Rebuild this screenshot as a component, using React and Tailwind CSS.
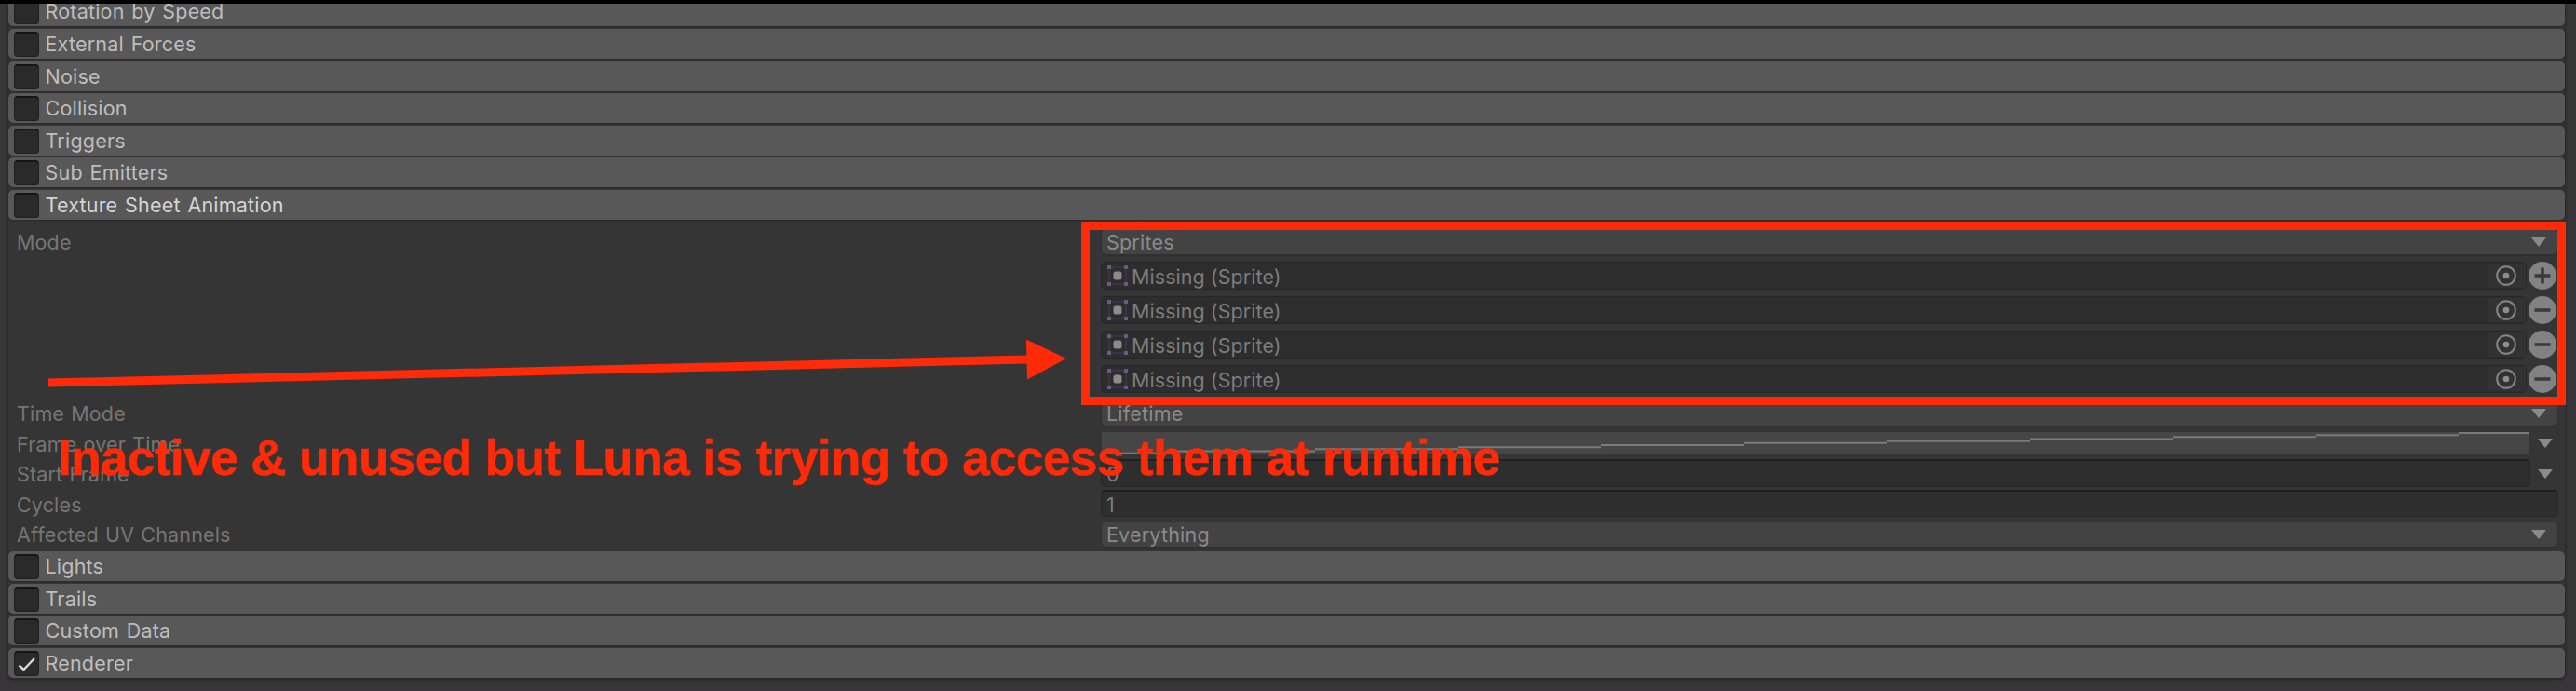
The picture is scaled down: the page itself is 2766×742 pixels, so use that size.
import React from "react";

const TOP = ["External Forces", "Noise", "Collision", "Triggers", "Sub Emitters", "Texture Sheet Animation"];
const BOTTOM = ["Lights", "Trails", "Custom Data", "Renderer"];
const STEPS = [0, 76, 229, 383, 536, 690, 843, 997, 1150, 1304, 1457, 1533];

function ModuleHeader({ label, checked, active, first }) {
  return (
    <div className={`shrink-0 ${first ? "h-[27px]" : "h-[34.6px]"} flex flex-col justify-end overflow-hidden`}>
      <div className="h-[32px] shrink-0 rounded-[5px] bg-[#585858] flex items-center pl-[6px] mb-[2.6px] shadow-[0_0_2px_1px_#282828]">
        <div className="w-[27px] h-[27px] mt-[1px] rounded-[4px] bg-[#2a2a2a] border border-[#202020] border-t-2 border-t-[#151515] flex items-center justify-center">
          {checked && (
            <svg width="20" height="18" viewBox="0 0 20 18" fill="none">
              <path d="M1.5 10.5 L6.5 15 L18 3" stroke="#d6d6d6" strokeWidth="2.4" />
            </svg>
          )}
        </div>
        <span className={`ml-[6.500px] text-[21.5px] leading-[32px] tracking-[0.2px] [word-spacing:1.5px] ${active ? "text-[#d4d4d4]" : "text-[#bdbdbd]"}`}>{label}</span>
      </div>
    </div>
  );
}

function Caret() {
  return (
    <svg width="16" height="10" viewBox="0 0 16 10" className="mt-px shrink-0">
      <path d="M0 0H16L8 10Z" fill="#8a8a8a" />
    </svg>
  );
}

function Label({ children, top }) {
  return <div className={`w-[1174px] shrink-0 ${top ? "" : "pt-[2px]"} pl-[9px] text-[21.5px] leading-[28px] tracking-[0.15px] [word-spacing:1px] text-[#757575]`}>{children}</div>;
}

function Dropdown({ children }) {
  return (
    <div className="w-[1563px] h-[27px] rounded-[5px] bg-[#434343] shadow-[0_1px_0_1px_#303030] flex items-center justify-between pl-[5px] pr-[12px] text-[21.5px] leading-[27px] tracking-[0.2px] text-[#8a8a8a]">
      <span className="pt-[2px]">{children}</span>
      <Caret />
    </div>
  );
}

function SpriteRow({ add }) {
  return (
    <div className="h-[36.8px] flex items-center">
      <div className="ml-[-1px] w-[1531px] h-[30px] rounded-[5px] bg-[#2d2d2d] border border-[#262626] flex items-center pl-[6px]">
        <svg width="22" height="22" viewBox="0 0 22 22" className="shrink-0">
          <path d="M2 2H20V20H2Z" fill="none" stroke="#443c56" strokeWidth="1.2" />
          <path d="M0 0H4V4H0ZM18 0H22V4H18ZM0 18H4V22H0ZM18 18H22V22H18Z" fill="#695b85" />
          <rect x="6.5" y="6.5" width="9" height="9" rx="2.5" fill="#8b8b8b" />
        </svg>
        <span className="ml-[4px] pt-[2px] grow text-[21.5px] leading-[26px] tracking-[0.05px] text-[#7c7c7c]">Missing (Sprite)</span>
        <div className="w-[40px] h-[26px] bg-[#323232] flex items-center justify-center pr-[2px]">
          <svg width="22" height="22" viewBox="0 0 22 22">
            <circle cx="11" cy="11" r="9.8" fill="none" stroke="#858585" strokeWidth="2" />
            <circle cx="11" cy="11" r="3.3" fill="#8d8d8d" />
          </svg>
        </div>
      </div>
      <svg width="30" height="30" viewBox="0 0 30 30" className="ml-[2px] shrink-0">
        <circle cx="15" cy="15" r="15" fill="#828282" />
        <path d={add ? "M6.5 15H23.5M15 6.5V23.5" : "M6.5 15H23.5"} stroke="#3a3a3a" strokeWidth="3.6" />
      </svg>
    </div>
  );
}

function Curve() {
  let d = "";
  for (let i = 0; i < STEPS.length - 1; i++) {
    const y = 22.7 - i * 2.17;
    d += `M${STEPS[i]} ${y}H${STEPS[i + 1]}`;
  }
  return (
    <svg width="1533" height="24" viewBox="0 0 1533 24" className="bg-[#464646] shrink-0">
      <path d={d} stroke="#7b7b7b" strokeWidth="2" />
    </svg>
  );
}

const input = "h-[29.5px] ml-[-1px] rounded-[5px] bg-[#2e2e2e] border border-[#272727] border-t-2 border-t-[#1f1f1f] pl-[5px] text-[21.5px] leading-[28px] text-[#7c7c7c]";

export default function App() {
  return (
    <div className="relative w-[2766px] h-[742px] overflow-hidden bg-[#383638] border-t-4 border-black font-['Inter',sans-serif]">
      <div className="ml-[9px] w-[2745px] h-[725px] bg-[#353535] rounded-b-[5px] shadow-[0_0_3px_1px_#272727] flex flex-col">
        <ModuleHeader label="Rotation by Speed" first />
        {TOP.map((t) => (
          <ModuleHeader key={t} label={t} active={t.startsWith("Texture")} />
        ))}
        <div className="h-[353.4px] shrink-0">
          <div className="h-[188.3px] pt-[7.5px] flex">
            <Label top>Mode</Label>
            <div>
              <Dropdown>Sprites</Dropdown>
              <div className="pt-[5px]">
                <SpriteRow add />
                <SpriteRow />
                <SpriteRow />
                <SpriteRow />
              </div>
            </div>
          </div>
          <div className="h-[32.5px] flex items-center">
            <Label>Time Mode</Label>
            <Dropdown>Lifetime</Dropdown>
          </div>
          <div className="h-[32.5px] flex items-center">
            <Label>Frame over Time</Label>
            <Curve />
            <div className="ml-[9px]"><Caret /></div>
          </div>
          <div className="h-[32.5px] flex items-center">
            <Label>Start Frame</Label>
            <div className={`w-[1535px] ${input}`}>0</div>
            <div className="ml-[8px]"><Caret /></div>
          </div>
          <div className="h-[32.5px] flex items-center">
            <Label>Cycles</Label>
            <div className={`w-[1565px] ${input}`}>1</div>
          </div>
          <div className="h-[32.5px] flex items-center">
            <Label>Affected UV Channels</Label>
            <Dropdown>Everything</Dropdown>
          </div>
        </div>
        {BOTTOM.map((t) => (
          <ModuleHeader key={t} label={t} checked={t === "Renderer"} />
        ))}
      </div>

      <div className="absolute left-[1161px] top-[234px] w-[1594px] h-[197px] border-[9px] border-[#ff2a08]" />
      <svg className="absolute left-0 top-[-4px]" width="1160" height="450" viewBox="0 0 1160 450">
        <path d="M52 411L1104 386" stroke="#ff2a08" strokeWidth="9" />
        <path d="M1102 364.500L1145 385L1103 407.500Z" fill="#ff2a08" />
      </svg>
      <div className="absolute left-[62px] top-[458px] whitespace-nowrap font-['Liberation_Sans',sans-serif] font-bold text-[53px] leading-[60px] tracking-[-0.53px] text-[#ff2a08] [-webkit-text-stroke:0.6px_#ff2a08]">
        Inactive &amp; unused but Luna is trying to access them at runtime
      </div>
    </div>
  );
}
